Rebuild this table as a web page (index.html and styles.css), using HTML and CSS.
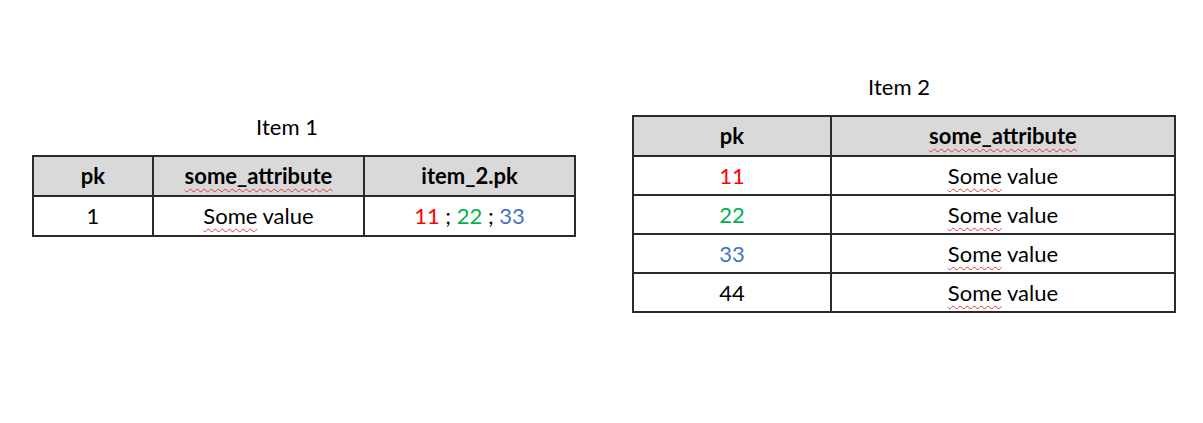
FILE: index.html
```html
<!DOCTYPE html>
<html>
<head>
<meta charset="utf-8">
<link rel="stylesheet" href="styles.css">
</head>
<body>
<div class="page">
  <section class="figure figure-1">
    <div class="title title-1">Item 1</div>
    <table class="grid grid-1">
      <thead>
        <tr><th class="c-pk">pk</th><th class="c-attr"><span class="spell">some_attribute</span></th><th class="c-fk">item_2.pk</th></tr>
      </thead>
      <tbody>
        <tr><td>1</td><td><span class="spell">Some</span> value</td><td><span class="red">11</span> ; <span class="green">22</span> ; <span class="blue">33</span></td></tr>
      </tbody>
    </table>
  </section>
  <section class="figure figure-2">
    <div class="title title-2">Item 2</div>
    <table class="grid grid-2">
      <thead>
        <tr><th class="c2-pk">pk</th><th class="c2-attr"><span class="spell">some_attribute</span></th></tr>
      </thead>
      <tbody>
        <tr><td class="red">11</td><td><span class="spell">Some</span> value</td></tr>
        <tr><td class="green">22</td><td><span class="spell">Some</span> value</td></tr>
        <tr><td class="blue">33</td><td><span class="spell">Some</span> value</td></tr>
        <tr><td>44</td><td><span class="spell">Some</span> value</td></tr>
      </tbody>
    </table>
  </section>
</div>
</body>
</html>
```
FILE: styles.css
```css
html, body {
  margin: 0;
  padding: 0;
  background: #ffffff;
}
body {
  font-family: "Lato", "Open Sans", sans-serif;
  font-size: 22px;
  color: #000;
}
.page {
  display: flex;
  align-items: flex-start;
  gap: 56px;
  padding-left: 32px;
}
.figure {
  display: flex;
  flex-direction: column;
}
.figure-1 { padding-top: 115px; }
.figure-2 { padding-top: 75px; }
.title {
  text-align: center;
  line-height: 24px;
  height: 24px;
  margin-bottom: 16px;
}
.title-1 { padding-right: 34px; }
.title-2 { padding-right: 10px; }
.grid {
  border-collapse: collapse;
  table-layout: fixed;
}
.grid th, .grid td {
  border: 2px solid #2a2a2a;
  text-align: center;
  padding: 0;
  font-weight: normal;
  line-height: 26px;
}
.grid th {
  background: #d9d9d9;
  font-weight: bold;
  height: 38px;
}
.grid td {
  height: 37px;
}
.grid-1 td { height: 38px; }
.c-pk { width: 118px; }
.c-attr { width: 209px; }
.c-fk { width: 209px; }
.c2-pk { width: 196px; }
.c2-attr { width: 342px; }
.spell {
  text-decoration: underline wavy #e0393e;
  text-decoration-thickness: 1px;
  text-underline-offset: 4px;
  text-decoration-skip-ink: none;
}
.red { color: #ff0000; }
.green { color: #00b050; }
.blue { color: #4472c4; }
```
